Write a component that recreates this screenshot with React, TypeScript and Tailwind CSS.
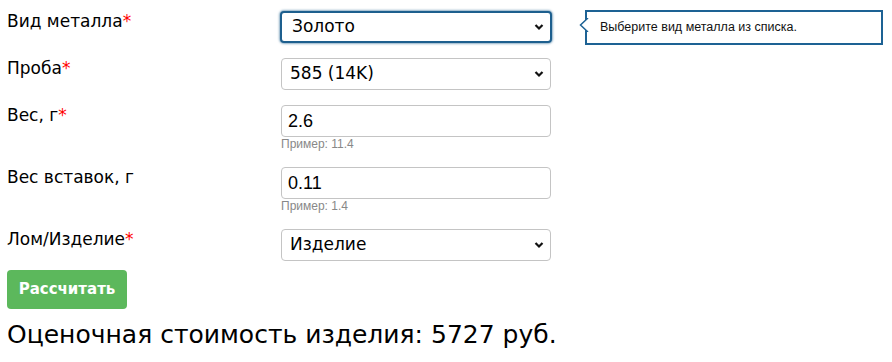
import React from "react";

const Chevron = () => (
  <svg className="pointer-events-none absolute right-[6px] top-1/2 -translate-y-1/2" width="10" height="8" viewBox="0 0 10 8">
    <path d="M1.5 2 L5 5.5 L8.5 2" fill="none" stroke="#111" strokeWidth="2.2" />
  </svg>
);

const Star = () => <span className="text-[#ff0000]">*</span>;

function SelectBox({ value, focused }: { value: string; focused?: boolean }) {
  return (
    <div
      className={
        focused
          ? "relative flex h-[32px] w-[272px] items-center rounded-[4px] border-2 border-[#1d5f8e] bg-white pl-[10px] text-[17px] text-black shadow-[0_0_2px_1px_rgba(29,95,142,0.5)]"
          : "relative flex h-[32px] w-[270px] items-center rounded-[4px] border border-[#c4c4c4] bg-white pl-[8px] text-[17px] text-black"
      }
    >
      <span>{value}</span>
      <Chevron />
    </div>
  );
}

function InputBox({ value }: { value: string }) {
  return (
    <div className="flex h-[32px] w-[270px] items-center rounded-[4px] border border-[#c4c4c4] bg-white pl-[6px] text-[18px] text-black [font-family:'Liberation_Sans',Arial,sans-serif]">
      {value}
    </div>
  );
}

export default function App() {
  return (
    <div className="relative h-[362px] w-[892px] bg-white pl-[7px] pt-[11px] text-black [font-family:'DejaVu_Sans','Open_Sans',sans-serif]">
      <div className="flex flex-col">
        <div className="flex">
          <div className="w-[273px] pt-[0px] text-[17px] leading-[20px]">
            Вид металла<Star />
          </div>
          <SelectBox value="Золото" focused />
        </div>
        <div className="mt-[15px] flex">
          <div className="w-[274px] text-[17px] leading-[20px]">
            Проба<Star />
          </div>
          <SelectBox value="585 (14K)" />
        </div>
        <div className="mt-[15px] flex">
          <div className="w-[274px] text-[17px] leading-[20px]">
            Вес, г<Star />
          </div>
          <div className="flex flex-col">
            <InputBox value="2.6" />
            <div className="h-[15px] text-[12px] leading-[15px] text-[#888888] [font-family:'Liberation_Sans',Arial,sans-serif]">Пример: 11.4</div>
          </div>
        </div>
        <div className="mt-[15px] flex">
          <div className="w-[274px] text-[17px] leading-[20px]">Вес вставок, г</div>
          <div className="flex flex-col">
            <InputBox value="0.11" />
            <div className="h-[15px] text-[12px] leading-[15px] text-[#888888] [font-family:'Liberation_Sans',Arial,sans-serif]">Пример: 1.4</div>
          </div>
        </div>
        <div className="mt-[15px] flex">
          <div className="w-[274px] text-[17px] leading-[20px]">
            Лом/Изделие<Star />
          </div>
          <SelectBox value="Изделие" />
        </div>
        <div className="mt-[9px]">
          <button className="h-[39px] w-[120px] rounded-[4px] bg-[#5cb85c] text-[15px] font-bold text-white">
            Рассчитать
          </button>
        </div>
        <div className="mt-[9px] text-[25px] leading-[34px]">Оценочная стоимость изделия: 5727 руб.</div>
      </div>

      <div className="absolute left-[585px] top-[10px] flex h-[35px] w-[298px] items-center border-2 border-[#1d6294] bg-white pl-[13px] text-[12.5px] text-[#111] [font-family:'Liberation_Sans',Arial,sans-serif]">
        Выберите вид металла из списка.
        <svg className="absolute left-[-8px] top-[6px]" width="10" height="14" viewBox="0 0 10 14">
          <path d="M9 0 L1.5 7 L9 14" fill="white" stroke="#1d6294" strokeWidth="1.5" />
        </svg>
      </div>
    </div>
  );
}
